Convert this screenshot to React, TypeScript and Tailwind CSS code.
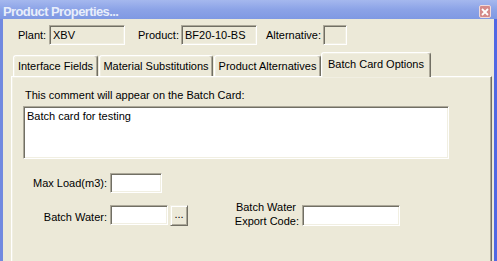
const sunken =
  "border border-t-[#ACA899] border-l-[#ACA899] border-b-white border-r-white shadow-[inset_1px_1px_0_#716F64,inset_-1px_-1px_0_#F1EFE2]";

function Field({ w, h = 20, value, disabled }: { w: string; h?: number; value?: string; disabled?: boolean }) {
  return (
    <div
      className={`${sunken} ${w} ${h === 21 ? "h-[21px]" : "h-[20px]"} ${
        disabled ? "bg-[#ECE9D8]" : "bg-white"
      } flex items-center pl-[3px] leading-[13px]`}
    >
      {value}
    </div>
  );
}

function Tab({ label, w, active }: { label: string; w: string; active?: boolean }) {
  if (active) {
    return (
      <div
        className={`${w} relative z-10 -mb-[1px] h-[25px] rounded-t-[3px] border-l border-t border-white border-r border-r-[#716F64] bg-[#ECE9D8] pt-[5px] text-center leading-[13px] shadow-[inset_-1px_0_0_#ACA899,inset_1px_1px_0_#F1EFE2]`}
      >
        {label}
      </div>
    );
  }
  return (
    <div
      className={`${w} h-[21px] rounded-t-[3px] border-l border-t border-white border-r border-r-[#716F64] pt-[4px] text-center leading-[13px] shadow-[inset_-1px_0_0_#ACA899,inset_1px_1px_0_#F1EFE2]`}
    >
      {label}
    </div>
  );
}

export default function App() {
  return (
    <div className="flex h-[261px] w-[497px] flex-col overflow-hidden bg-[#7B93E3] font-['Liberation_Sans',Arial,sans-serif] text-[11px] text-black">
      {/* title bar */}
      <div className="flex h-[19px] items-start justify-between bg-gradient-to-b from-[#A5B8EE] via-[#8CA3E7] to-[#7F99E3] pl-[3px] pr-[6px]">
        <span className="pt-[5px] text-[13px] font-bold leading-[13px] tracking-[-0.6px] text-[#E8EEFB]">
          Product Properties...
        </span>
        <div className="mt-[5px] flex h-[13px] w-[12px] items-center justify-center rounded-[2px] border border-[#F2DADA] bg-[#D48A8A]">
          <svg width="8" height="8" viewBox="0 0 8 8">
            <path d="M1 1 L7 7 M7 1 L1 7" stroke="white" strokeWidth="1.8" />
          </svg>
        </div>
      </div>

      <div className="flex min-h-0 flex-1">
        <div className="w-[3px] bg-[#7189E0]" />
        <div className="flex min-h-0 flex-1 flex-col bg-[#ECE9D8] pl-[8px] pr-[2px]">
          {/* header fields */}
          <div className="mt-[6px] flex h-[20px] items-center pl-[7px]">
            <span className="w-[31px]">Plant:</span>
            <Field w="w-[76px]" value="XBV" disabled />
            <span className="ml-[13px] w-[43px]">Product:</span>
            <Field w="w-[76px]" value="BF20-10-BS" disabled />
            <span className="ml-[9px] w-[57px]">Alternative:</span>
            <Field w="w-[24px]" disabled />
          </div>

          {/* tabs */}
          <div className="mt-[7px] flex h-[24px] items-end pl-[2px]">
            <Tab label="Interface Fields" w="w-[85px]" />
            <div className="w-[1px]" />
            <Tab label="Material Substitutions" w="w-[114px]" />
            <div className="w-[1px]" />
            <Tab label="Product Alternatives" w="w-[107px]" />
            <Tab label="Batch Card Options" w="w-[110px]" active />
          </div>

          {/* tab page */}
          <div className="flex flex-1 flex-col border-l border-t border-white border-r border-r-[#716F64] pt-[12px] shadow-[inset_-1px_0_0_#ACA899,inset_1px_1px_0_#F1EFE2]">
            <div className="pl-[13px] leading-[13px]">This comment will appear on the Batch Card:</div>
            <div className={`${sunken} ml-[11px] mt-[4px] h-[53px] w-[426px] bg-white pl-[3px] pt-[3px] leading-[13px]`}>
              Batch card for testing
            </div>

            <div className="mt-[14px] flex items-center">
              <span className="w-[95px] text-right">Max Load(m3):</span>
              <div className="ml-[3px]">
                <Field w="w-[52px]" />
              </div>
            </div>

            <div className="mt-[12px] flex items-start">
              <span className="mt-[4px] w-[95px] text-right">Batch Water:</span>
              <div className="ml-[3px]">
                <Field w="w-[58px]" />
              </div>
              <div className="ml-[2px] flex h-[21px] w-[18px] items-center justify-center border border-l-[#F1EFE2] border-t-[#F1EFE2] border-b-[#716F64] border-r-[#716F64] bg-[#ECE9D8] pb-[3px] leading-none shadow-[inset_1px_1px_0_#fff,inset_-1px_-1px_0_#ACA899]">
                ...
              </div>
              <div className="ml-[42px] flex w-[69px] flex-col items-end leading-[14px] -mt-[5px]">
                <span className="pr-[3px]">Batch Water</span>
                <span>Export Code:</span>
              </div>
              <div className="ml-[3px]">
                <Field w="w-[98px]" h={21} />
              </div>
            </div>
          </div>
        </div>
        <div className="w-[3px] bg-[#5068E4]" />
      </div>
    </div>
  );
}
